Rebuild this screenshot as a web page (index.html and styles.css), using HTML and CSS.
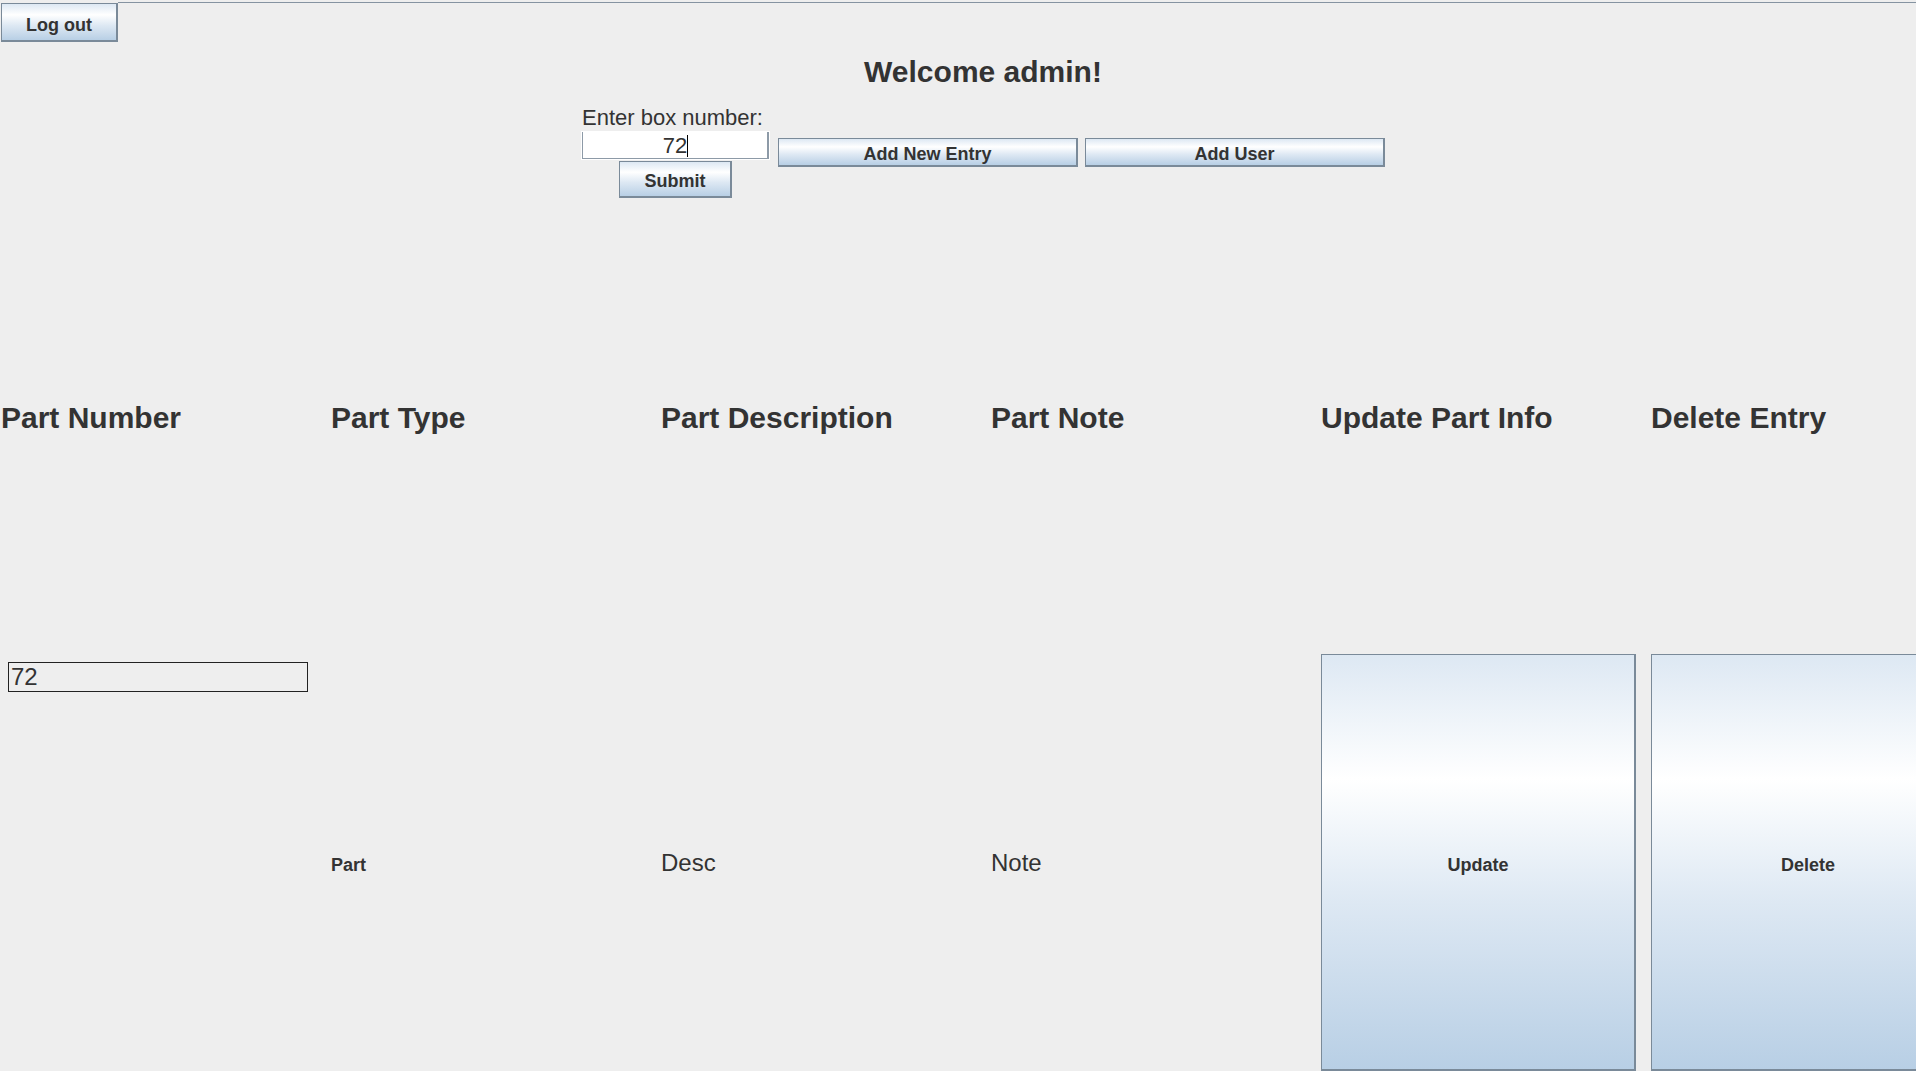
FILE: index.html
```html
<!DOCTYPE html>
<html lang="en">
<head>
    <meta charset="UTF-8">
    <meta name="viewport" content="width=device-width, initial-scale=1.0">
    <title>Parts Inventory</title>
    <link rel="stylesheet" href="styles.css">
</head>
<body>
    <div class="topbar">
        <button class="btn logout">Log out</button>
        <div class="topbar-rule"></div>
    </div>

    <div class="header">
        <h1>Welcome admin!</h1>

        <div class="form-row">
            <div class="box-form">
                <label class="box-label">Enter box number:</label>
                <div class="box-field">72<span class="caret"></span></div>
                <button class="btn submit">Submit</button>
            </div>
            <button class="btn wide">Add New Entry</button>
            <button class="btn wide">Add User</button>
        </div>
    </div>

    <div class="grid">
        <div class="head">Part Number</div>
        <div class="head">Part Type</div>
        <div class="head">Part Description</div>
        <div class="head">Part Note</div>
        <div class="head">Update Part Info</div>
        <div class="head">Delete Entry</div>

        <div class="cell cell-top">
            <div class="part-field">72</div>
        </div>
        <div class="cell"><span class="type-text">Part</span></div>
        <div class="cell"><span class="plain-text">Desc</span></div>
        <div class="cell"><span class="plain-text">Note</span></div>
        <div class="cell"><button class="btn big">Update</button></div>
        <div class="cell"><button class="btn big">Delete</button></div>
    </div>
</body>
</html>
```

FILE: styles.css
```css
body {
    margin: 0;
    background-color: #eeeeee;
    font-family: 'Liberation Sans', Arial, sans-serif;
    color: #333333;
    overflow: hidden;
    width: 1916px;
    height: 1071px;
}

/* 按钮：Ocean 风格渐变 */
.btn {
    box-sizing: border-box;
    border: 1px solid #7a8a99;
    border-right-width: 2px;
    border-bottom-width: 2px;
    background: linear-gradient(to bottom, #dde8f3 0%, #ffffff 30%, #dde8f3 60%, #b8cfe5 100%);
    font-family: 'Liberation Sans', Arial, sans-serif;
    font-weight: bold;
    font-size: 18px;
    color: #333333;
    padding: 5px 0 0;
    display: flex;
    align-items: center;
    justify-content: center;
    cursor: pointer;
}

.topbar {
    display: flex;
    align-items: flex-start;
    padding-top: 2px;
}

.logout {
    width: 117px;
    height: 39px;
    margin: 1px 0 0 1px;
    padding-top: 7px;
}

.topbar-rule {
    flex: 1;
    border-top: 1px solid #8593a1;
}

.header {
    width: 1966px;
    display: flex;
    flex-direction: column;
    align-items: center;
}

h1 {
    margin: 13px 0 0;
    font-size: 30px;
    line-height: 34px;
    font-weight: bold;
    color: #333333;
}

.form-row {
    display: flex;
    align-items: center;
    margin-top: 17px;
}

.box-form {
    width: 189px;
    display: flex;
    flex-direction: column;
    align-items: center;
    margin-right: 8px;
}

.box-label {
    align-self: flex-start;
    font-size: 22px;
    line-height: 23px;
    margin-left: 1px;
    white-space: nowrap;
}

.box-field {
    box-sizing: border-box;
    width: 189px;
    height: 29px;
    margin-top: 2px;
    background-color: #ffffff;
    border: 1px solid #ffffff;
    box-shadow: inset 1px 0 0 #8d9aa7, inset -2px -1px 0 #8d9aa7;
    font-size: 22px;
    line-height: 27px;
    text-align: center;
    color: #333333;
}

.caret {
    display: inline-block;
    width: 0;
    height: 22px;
    border-right: 1.5px solid #000000;
    vertical-align: -4px;
}

.submit {
    width: 113px;
    height: 37px;
    margin-top: 1px;
}

.wide {
    width: 300px;
    height: 29px;
}

.wide + .wide {
    margin-left: 7px;
}

.grid {
    display: grid;
    grid-template-columns: repeat(6, 330px);
    grid-template-rows: 440px 417px;
    row-gap: 16px;
    width: 1980px;
}

.head {
    display: flex;
    align-items: center;
    padding-left: 1px;
    font-size: 30px;
    line-height: 34px;
    font-weight: bold;
    white-space: nowrap;
}

.cell {
    display: flex;
    align-items: center;
    padding-left: 1px;
}

.cell-top {
    align-items: flex-start;
    padding: 8px 0 0 8px;
}

.part-field {
    box-sizing: border-box;
    width: 300px;
    height: 30px;
    border: 1px solid #222222;
    font-size: 24px;
    line-height: 27px;
    padding-left: 2px;
    color: #333333;
}

.type-text {
    font-size: 18px;
    font-weight: bold;
    padding-top: 6px;
}

.plain-text {
    font-size: 24px;
}

.big {
    width: 315px;
    height: 417px;
    padding-top: 7px;
}
```
